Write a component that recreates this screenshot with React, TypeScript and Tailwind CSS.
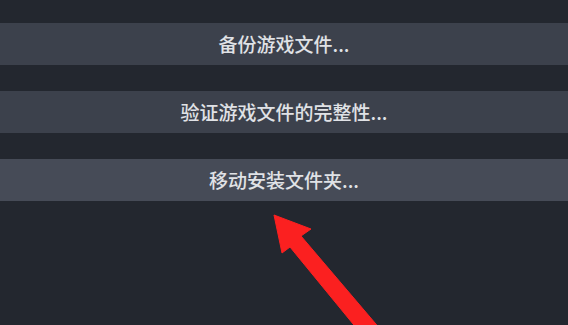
import React from "react";

const items = [
  { label: "备份游戏文件...", active: false },
  { label: "验证游戏文件的完整性...", active: false },
  { label: "移动安装文件夹...", active: true },
];

export default function App() {
  return (
    <div
      className="relative w-[568px] h-[325px] overflow-hidden bg-[#23272f]"
      style={{ fontFamily: '"Noto Sans CJK SC", "Noto Sans", sans-serif' }}
    >
      <div className="flex flex-col gap-[26px] pt-[23px]">
        {items.map((it) => (
          <div
            key={it.label}
            className={`h-[42px] w-full flex items-center justify-center text-[19px] font-medium text-[#e0e2e6] ${
              it.active ? "bg-[#464b57]" : "bg-[#3c414c]"
            }`}
          >
            {it.label}
          </div>
        ))}
      </div>
      <svg
        className="absolute left-0 top-0"
        width="568"
        height="325"
        viewBox="0 0 568 325"
      >
        <polygon
          points="274,215 311,229 301,236 381,330 358,330 290,247 282,253"
          fill="#fb2020"
          strokeLinejoin="round"
          stroke="#fb2020"
          strokeWidth="1"
        />
      </svg>
    </div>
  );
}
